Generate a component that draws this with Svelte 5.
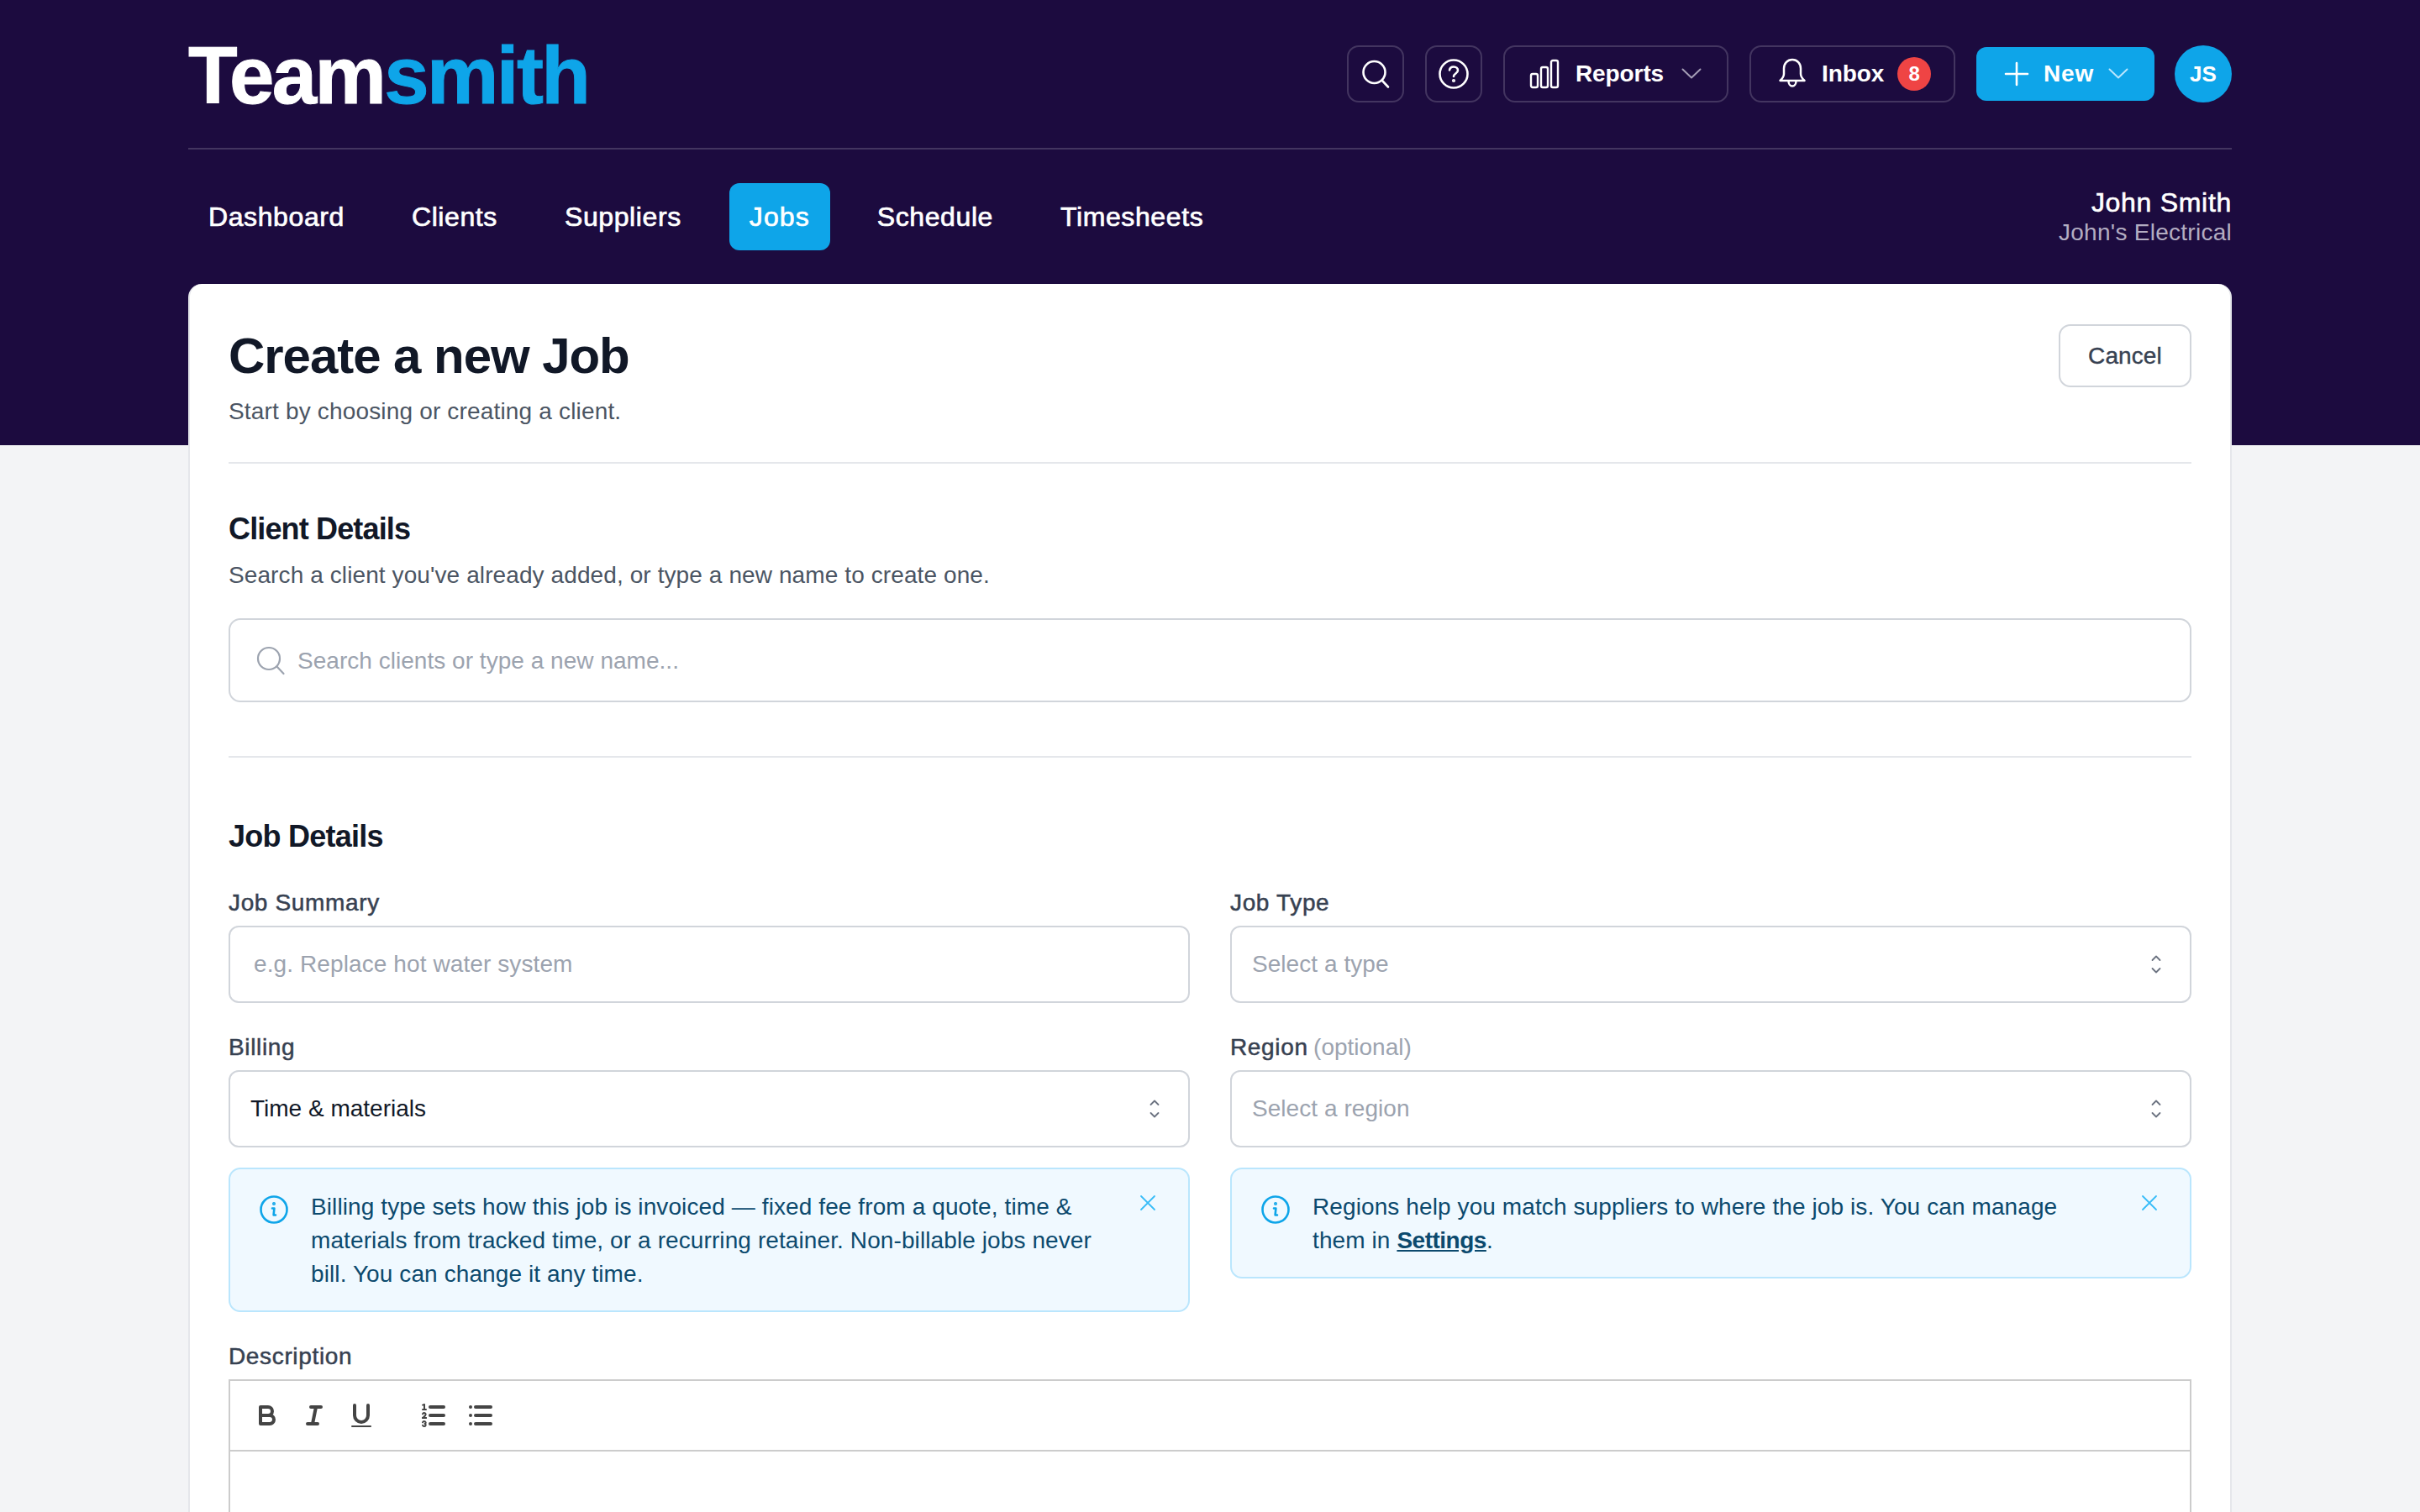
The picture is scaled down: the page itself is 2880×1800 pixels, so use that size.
<script>
  const nav = ['Dashboard', 'Clients', 'Suppliers', 'Jobs', 'Schedule', 'Timesheets'];
</script>

{#snippet updown()}
  <svg class="updown" viewBox="0 0 14 24" width="14" height="24" fill="none" stroke="currentColor" stroke-width="1.8" stroke-linecap="round" stroke-linejoin="round"><path d="M2.5 7 7 2.5 11.5 7M2.5 17 7 21.5 11.5 17"/></svg>
{/snippet}

{#snippet chevron()}
  <svg class="chev" viewBox="0 0 24 13" width="24" height="13" fill="none" stroke="currentColor" stroke-width="2" stroke-linecap="round" stroke-linejoin="round"><path d="M1.5 1.5 12 11.5 22.5 1.5"/></svg>
{/snippet}

{#snippet infoAlert(content)}
  <div class="alert">
    <svg class="info" viewBox="0 0 40 40" width="40" height="40" fill="none" stroke="#0ea5e9" stroke-width="2.6" stroke-linecap="round" stroke-linejoin="round"><circle cx="20" cy="20" r="15.5"/><path d="M18 18.5h2.4l-.8 8h2.4"/><circle cx="20" cy="13" r=".7" fill="#0ea5e9"/></svg>
    <p>{@render content()}</p>
    <svg class="close" viewBox="0 0 20 20" width="20" height="20" fill="none" stroke="#38bdf8" stroke-width="1.8" stroke-linecap="round"><path d="M2 2l16 16M18 2 2 18"/></svg>
  </div>
{/snippet}

{#snippet billingText()}Billing type sets how this job is invoiced — fixed fee from a quote, time &amp;<br>materials from tracked time, or a recurring retainer. Non-billable jobs never<br>bill. You can change it any time.{/snippet}
{#snippet regionText()}Regions help you match suppliers to where the job is. You can manage<br>them in <a href="#settings">Settings</a>.{/snippet}

<div class="page">
  <header class="top">
    <div class="wrap">
      <div class="bar">
        <div class="logo">Team<span>smith</span></div>
        <div class="actions">
          <button class="outline square" aria-label="Search">
            <svg viewBox="0 0 36 36" width="36" height="36" fill="none" stroke="#fff" stroke-width="2.6" stroke-linecap="round"><circle cx="16.5" cy="16" r="13"/><path d="M26 26l7 7.5"/></svg>
          </button>
          <button class="outline square" aria-label="Help">
            <svg viewBox="0 0 40 40" width="40" height="40" fill="none" stroke="#fff" stroke-width="2.6" stroke-linecap="round" stroke-linejoin="round"><circle cx="20" cy="20" r="16.5"/><path d="M15 15.5c.4-2.6 2.5-4 5-4 2.900 0 5 1.800 5 4.300 0 3.600-5 3.900-5 7.200"/><circle cx="20" cy="28" r=".8" fill="#fff"/></svg>
          </button>
          <button class="outline reports">
            <svg viewBox="0 0 36 36" width="36" height="36" fill="none" stroke="#fff" stroke-width="2.4" stroke-linejoin="round"><rect x="2" y="18" width="8" height="16" rx="2"/><rect x="14" y="10" width="8" height="24" rx="2"/><rect x="26" y="2" width="8" height="32" rx="2"/></svg>
            <span class="b">Reports</span>
            {@render chevron()}
          </button>
          <button class="outline inbox">
            <svg viewBox="0 0 36 40" width="36" height="40" fill="none" stroke="#fff" stroke-width="2.5" stroke-linecap="round" stroke-linejoin="round"><path d="M18 3c-6 0-10 4.600-10 10.500v6.500c0 3-1.800 5.500-4.500 8h29c-2.700-2.500-4.500-5-4.500-8v-6.500C28 7.600 24 3 18 3zM13.500 28.500c0 3.500 2 6 4.500 6s4.500-2.500 4.500-6"/></svg>
            <span class="b">Inbox</span>
            <span class="badge">8</span>
          </button>
          <button class="new">
            <svg viewBox="0 0 30 30" width="30" height="30" fill="none" stroke="#fff" stroke-width="2.6" stroke-linecap="round"><path d="M15 2v26M2 15h26"/></svg>
            <span class="b wide">New</span>
            {@render chevron()}
          </button>
          <div class="avatar">JS</div>
        </div>
      </div>
      <nav class="nav">
        <ul>
          {#each nav as item}
            <li class:active={item === 'Jobs'}>{item}</li>
          {/each}
        </ul>
        <div class="who">
          <div class="name">John Smith</div>
          <div class="org">John's Electrical</div>
        </div>
      </nav>
    </div>
  </header>

  <main class="card">
    <section class="head">
      <div>
        <h1>Create a new Job</h1>
        <p class="muted lead">Start by choosing or creating a client.</p>
      </div>
      <button class="cancel">Cancel</button>
    </section>

    <section class="client">
      <h2>Client Details</h2>
      <p class="muted">Search a client you've already added, or type a new name to create one.</p>
      <div class="search">
        <svg viewBox="0 0 36 36" width="36" height="36" fill="none" stroke="#9ca3af" stroke-width="2.2" stroke-linecap="round"><circle cx="16" cy="16" r="13"/><path d="M25.500 25.500l8 8.500"/></svg>
        <input placeholder="Search clients or type a new name..." />
      </div>
    </section>

    <section class="job">
      <h2>Job Details</h2>
      <div class="grid">
        <div>
          <div class="label">Job Summary</div>
          <input class="field text" placeholder="e.g. Replace hot water system" />
        </div>
        <div>
          <div class="label">Job Type</div>
          <div class="field select ph">Select a type {@render updown()}</div>
        </div>
        <div>
          <div class="label">Billing</div>
          <div class="field select">Time &amp; materials {@render updown()}</div>
          {@render infoAlert(billingText)}
        </div>
        <div>
          <div class="label">Region <span class="opt">(optional)</span></div>
          <div class="field select ph">Select a region {@render updown()}</div>
          {@render infoAlert(regionText)}
        </div>
      </div>

      <div class="label desc">Description</div>
      <div class="toolbar">
        <span class="tb"><svg viewBox="0 0 18 18"><path d="M5,4H9.500A2.500,2.500,0,0,1,12,6.500v0A2.500,2.500,0,0,1,9.500,9H5A0,0,0,0,1,5,9V4A0,0,0,0,1,5,4Z"/><path d="M5,9h5.500A2.500,2.500,0,0,1,13,11.500v0A2.500,2.500,0,0,1,10.500,14H5a0,0,0,0,1,0,0V9A0,0,0,0,1,5,9Z"/></svg></span>
        <span class="tb"><svg viewBox="0 0 18 18"><path d="M7 4h6M5 14h6M8 14l2-10"/></svg></span>
        <span class="tb group-end"><svg viewBox="0 0 18 18"><path d="M5,3V9a4.012,4.012,0,0,0,4,4H9a4.012,4.012,0,0,0,4-4V3"/><rect class="fill" height="1" rx="0.5" ry="0.5" width="12" x="3" y="15"/></svg></span>
        <span class="tb"><svg viewBox="0 0 18 18"><path d="M7 4h8M7 9h8M7 14h8"/><path class="thin" d="M2.500 5.500h2M2.500 10.500h2"/><path class="fill" d="M3.500,6A0.500,0.500,0,0,1,3,5.500V3.085l-0.276.138A0.500,0.500,0,0,1,2.053,3c-0.124-.247-0.023-0.324.224-0.447l1-.5A0.500,0.500,0,0,1,4,2.500v3A0.500,0.500,0,0,1,3.500,6Z"/><path class="thin" d="M4.500,10.500h-2c0-.234,1.850-1.076,1.850-2.234A0.959,0.959,0,0,0,2.500,8.156"/><path class="thin" d="M2.500,14.846a0.959,0.959,0,0,0,1.850-.109A0.700,0.700,0,0,0,3.750,14a0.688,0.688,0,0,0,.6-0.736,0.959,0.959,0,0,0-1.850-.109"/></svg></span>
        <span class="tb"><svg viewBox="0 0 18 18"><path d="M6 4h9M6 9h9M6 14h9M3 4h0M3 9h0M3 14h0"/></svg></span>
      </div>
      <div class="editor"></div>
    </section>
  </main>
</div>

<style>
  :global(body) { margin: 0; background: #f3f4f6; }
  .page { font-family: "Liberation Sans", Arial, sans-serif; font-size: 28px; line-height: 40px; color: #111827; letter-spacing: .1px; }
  h1, h2, p, ul { margin: 0; padding: 0; }
  button { font: inherit; color: inherit; background: none; padding: 0; letter-spacing: inherit; }

  .top { background: #1c0b3f; height: 530px; }
  .wrap { width: 2432px; margin: 0 auto; }
  .bar { height: 176px; border-bottom: 2px solid #433560; display: flex; align-items: center; justify-content: space-between; }
  .logo { font-size: 96px; font-weight: 700; letter-spacing: -2.6px; line-height: 96px; color: #fff; margin-top: 4px; -webkit-text-stroke: 1px #fff; }
  .logo span { color: #0ea5e9; -webkit-text-stroke: 1px #0ea5e9; }
  .actions { display: flex; align-items: center; gap: 25px; color: #fff; margin-top: -1px; }
  .b { font-weight: 700; letter-spacing: -0.1px; }
  .b.wide { letter-spacing: .8px; }
  .outline { height: 68px; border: 2px solid #433560; border-radius: 14px; display: flex; align-items: center; box-sizing: border-box; }
  .square { width: 68px; justify-content: center; }
  .reports { width: 268px; padding-left: 29px; gap: 19px; }
  .reports .chev { margin-left: 2px; color: #a49db5; }
  .inbox { width: 245px; padding-left: 31px; gap: 17px; }
  .inbox .badge { margin-left: -1px; }
  .badge { width: 40px; height: 40px; border-radius: 50%; background: #ef4444; color: #fff; font-size: 24px; font-weight: 700; display: flex; align-items: center; justify-content: center; }
  .new { height: 64px; width: 212px; border: 0; border-radius: 12px; background: #0ea5e9; display: flex; align-items: center; padding-left: 33px; gap: 17px; box-sizing: border-box; color: #fff; }
  .new .chev { color: #bae6fd; }
  .avatar { width: 68px; height: 68px; border-radius: 50%; background: #0ea5e9; font-size: 26px; font-weight: 700; display: flex; align-items: center; justify-content: center; margin-left: -1px; }

  .nav { height: 160px; display: flex; align-items: center; justify-content: space-between; color: #fff; }
  .nav ul { list-style: none; display: flex; gap: 32px; margin-top: 0; }
  .nav li { height: 80px; padding: 0 24px; display: flex; align-items: center; font-size: 32px; letter-spacing: .6px; border-radius: 12px; -webkit-text-stroke: .7px #fff; }
  .nav li.active { background: #0ea5e9; margin-left: 1px; letter-spacing: 1.1px; }
  .who { text-align: right; }
  .name { font-size: 32px; line-height: 38px; letter-spacing: .7px; -webkit-text-stroke: .6px #fff; }
  .org { font-size: 28px; line-height: 34px; letter-spacing: .27px; color: #b3adc2; }

  .card { width: 2432px; box-sizing: border-box; margin: -192px auto 0; background: #fff; border: 2px solid #e5e7eb; border-top: 0; border-radius: 16px 16px 0 0; padding: 48px 46px 96px; }
  .head { display: flex; justify-content: space-between; align-items: flex-start; border-bottom: 2px solid #e5e7eb; height: 164px; }
  h1 { font-size: 60px; line-height: 72px; font-weight: 700; letter-spacing: -1.05px; padding-top: 2px; margin-bottom: 10px; }
  h2 { font-size: 36px; line-height: 48px; font-weight: 700; letter-spacing: -.85px; }
  .muted { color: #4b5563; }
  .lead { letter-spacing: .17px; }
  .cancel { width: 158px; height: 75px; border: 2px solid #d1d5db; border-radius: 14px; color: #374151; -webkit-text-stroke: .4px #374151; }

  .client { padding-top: 54px; height: 294px; box-sizing: content-box; border-bottom: 2px solid #e5e7eb; }
  .client .muted { margin-top: 11px; margin-bottom: -1px; }
  .search { margin-top: 32px; height: 100px; box-sizing: border-box; border: 2px solid #d1d5db; border-radius: 14px; display: flex; align-items: center; padding-left: 30px; gap: 14px; }
  .search input { letter-spacing: .03px; padding-top: 1px; }
  input { border: 0; outline: 0; font: inherit; color: #111827; background: none; flex: 1; padding: 0; min-width: 0; letter-spacing: inherit; }
  input::placeholder { color: #9ca3af; opacity: 1; }

  .job { padding-top: 70px; }
  .job h2 { margin-bottom: 34px; letter-spacing: -.75px; }
  .grid { display: grid; grid-template-columns: 1144px 1144px; column-gap: 48px; row-gap: 32px; align-items: start; }
  .label { color: #374151; padding-top: 1px; margin-bottom: 7px; letter-spacing: .65px; -webkit-text-stroke: .5px #374151; }
  .opt { color: #9ca3af; -webkit-text-stroke: 0; letter-spacing: 0; margin-left: -2px; }
  .field { width: 100%; height: 92px; box-sizing: border-box; border: 2px solid #d1d5db; border-radius: 12px; }
  .text { padding: 0 28px; display: block; }
  .select { display: flex; align-items: center; justify-content: space-between; padding: 0 33px 0 24px; color: #111827; letter-spacing: 0; }
  .select.ph { color: #9ca3af; letter-spacing: .05px; }
  .updown { color: #6b7280; }
  .alert { margin-top: 24px; border: 2px solid #bae6fd; border-radius: 14px; background: #f0f9ff; padding: 24px 32px; display: flex; color: #0c4a6e; position: relative; }
  .alert p { margin: 1px 0 -1px 24px; white-space: nowrap; }
  .alert a { color: inherit; font-weight: 700; letter-spacing: -.5px; text-decoration: underline; }
  .info { margin-top: 4px; flex: none; }
  .close { position: absolute; right: 38px; top: 30px; }

  .desc { margin-top: 32px; margin-bottom: 7px; }
  .toolbar { border: 2px solid #ccc; box-sizing: border-box; height: 86px; padding: 17px 16px; display: flex; }
  .tb { width: 56px; height: 48px; box-sizing: border-box; padding: 6px 10px; display: block; }
  .tb.group-end { margin-right: 30px; }
  .tb svg { display: block; width: 36px; height: 36px; fill: none; stroke: #444; stroke-width: 2; stroke-linecap: round; stroke-linejoin: round; }
  .tb svg :global(.fill) { fill: #444; stroke: none; }
  .tb svg :global(.thin) { stroke-width: 1; }
  .editor { border: 2px solid #ccc; border-top: 0; height: 400px; }
</style>
